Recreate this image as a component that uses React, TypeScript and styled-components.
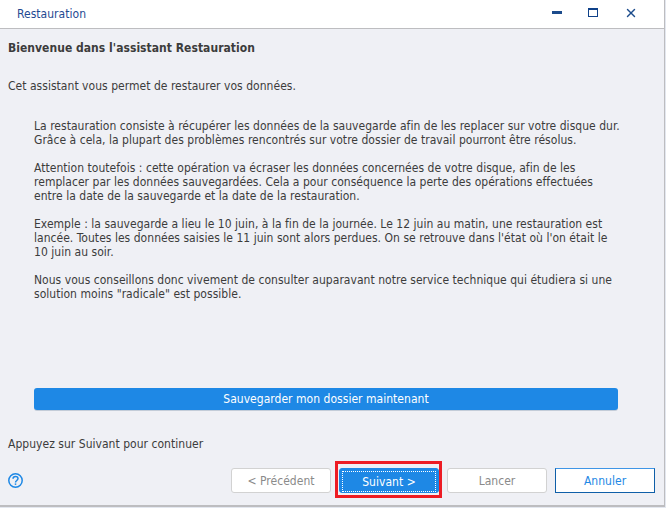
import { type FC } from 'react'
import styled, { createGlobalStyle } from 'styled-components'
import { X } from 'lucide-react'

const GlobalStyle = createGlobalStyle`
  html, body {
    margin: 0;
    height: 100%;
    background: #e3e7ef;
    overflow: hidden;
  }
  body {
    font-family: 'DejaVu Sans', 'Noto Sans', sans-serif;
    font-stretch: condensed;
    font-size: 12px;
    letter-spacing: 0.03px;
    color: #3c3c3c;
  }
`

const Window = styled.div`
  width: 665px;
  height: 507px;
  display: flex;
  flex-direction: column;
  box-sizing: border-box;
  border-right: 1px solid #bdbdc0;
  border-bottom: 2px solid #bdbdc0;
  background: #eff0f5;
`

const TitleBar = styled.header`
  height: 29px;
  flex: none;
  box-sizing: border-box;
  display: flex;
  align-items: center;
  justify-content: space-between;
  padding: 0 26px 1px 17px;
  background: #fff;
  border-bottom: 1px solid #bdbdc0;
`

const TitleText = styled.span`
  color: #1f4a92;
`

const WindowControls = styled.div`
  display: flex;
  align-items: center;
  gap: 26px;
  color: #1c4c8c;
  margin-top: -2px;
`

const MinimizeIcon = styled.span`
  width: 10px;
  height: 3px;
  background: #1c4c8c;
`

const MaximizeIcon = styled.span`
  width: 10px;
  height: 9px;
  box-sizing: border-box;
  border: 1px solid #0f4189;
  border-top-width: 2px;
`

const Content = styled.main`
  flex: 1;
  display: flex;
  flex-direction: column;
  padding: 11px 9px 0 8px;
`

const Heading = styled.h1`
  margin: 0;
  font-size: 12px;
  font-weight: 700;
  line-height: 16px;
`

const Intro = styled.p`
  margin: 22px 0 0;
  line-height: 16px;
`

const Explanation = styled.div`
  margin: 25px 31px 0 26px;
  display: flex;
  flex-direction: column;
  gap: 14px;
`

const Paragraph = styled.p`
  margin: 0;
  line-height: 14px;
`

const BackupButton = styled.button`
  margin: 87px 37px 0 26px;
  height: 22px;
  padding: 0;
  border: none;
  border-radius: 3px;
  background: #1e88e5;
  color: #fff;
  font: inherit;
  letter-spacing: inherit;
  box-shadow: 0 1px 0 #c3ccd8;
`

const Hint = styled.p`
  margin: 26px 0 0;
  line-height: 16px;
`

const Footer = styled.footer`
  margin-top: 16px;
  display: flex;
  align-items: center;
  justify-content: space-between;
`

const HelpIcon = styled.svg`
  width: 15px;
  height: 15px;
  fill: none;
  stroke: #1e88e5;
  stroke-width: 1.5;
`

const Actions = styled.div`
  display: flex;
  align-items: center;
  gap: 8px;
`

type ActionProps = { $variant: 'disabled' | 'primary' | 'cancel' }

const ActionButton = styled.button<ActionProps>`
  width: 100px;
  height: 25px;
  padding: 0;
  box-sizing: border-box;
  font: inherit;
  letter-spacing: inherit;
  border-radius: ${({ $variant }) => ($variant === 'cancel' ? '0' : '3px')};
  border: 1px solid
    ${({ $variant }) =>
      $variant === 'disabled' ? '#d2d2d2' : $variant === 'cancel' ? '#0f5fa8' : '#1e88e5'};
  border-top-color: ${({ $variant }) =>
    $variant === 'disabled' ? '#d2d2d2' : $variant === 'cancel' ? '#3f95e6' : '#1e88e5'};
  background: ${({ $variant }) => ($variant === 'primary' ? '#1e88e5' : '#fff')};
  color: ${({ $variant }) =>
    $variant === 'disabled' ? '#8a8a8a' : $variant === 'cancel' ? '#1e88e5' : '#fff'};
`

const HighlightedAction = styled.span`
  position: relative;
  display: flex;
`

const HighlightFrame = styled.span`
  position: absolute;
  inset: -7px -3px -5px -4px;
  border: 3px solid #ed1c24;
  pointer-events: none;
`

const FocusLabel = styled.span`
  display: flex;
  align-items: center;
  justify-content: center;
  margin: 2px;
  height: 19px;
  border: 1px dotted #fff;
`

const paragraphs = [
  "La restauration consiste à récupérer les données de la sauvegarde afin de les replacer sur votre disque dur. Grâce à cela, la plupart des problèmes rencontrés sur votre dossier de travail pourront être résolus.",
  "Attention toutefois : cette opération va écraser les données concernées de votre disque, afin de les remplacer par les données sauvegardées. Cela a pour conséquence la perte des opérations effectuées entre la date de la sauvegarde et la date de la restauration.",
  "Exemple : la sauvegarde a lieu le 10 juin, à la fin de la journée. Le 12 juin au matin, une restauration est lancée. Toutes les données saisies le 11 juin sont alors perdues. On se retrouve dans l'état où l'on était le 10 juin au soir.",
  'Nous vous conseillons donc vivement de consulter auparavant notre service technique qui étudiera si une solution moins "radicale" est possible.',
]

const App: FC = () => (
  <>
    <GlobalStyle />
    <Window>
      <TitleBar>
        <TitleText>Restauration</TitleText>
        <WindowControls>
          <MinimizeIcon />
          <MaximizeIcon />
          <X size={14} strokeWidth={2.5} />
        </WindowControls>
      </TitleBar>
      <Content>
        <Heading>Bienvenue dans l'assistant Restauration</Heading>
        <Intro>Cet assistant vous permet de restaurer vos données.</Intro>
        <Explanation>
          {paragraphs.map((text) => (
            <Paragraph key={text}>{text}</Paragraph>
          ))}
        </Explanation>
        <BackupButton>Sauvegarder mon dossier maintenant</BackupButton>
        <Hint>Appuyez sur Suivant pour continuer</Hint>
        <Footer>
          <HelpIcon viewBox="0 0 15 15">
            <circle cx="7.5" cy="7.5" r="6.7" />
            <path d="M5 5.8c0-1.5 1.1-2.4 2.5-2.4s2.5.9 2.5 2.2c0 1.9-2.5 1.9-2.5 3.9" />
            <path d="M7.5 10.4v1.5" />
          </HelpIcon>
          <Actions>
            <ActionButton $variant="disabled">&lt; Précédent</ActionButton>
            <HighlightedAction>
              <ActionButton $variant="primary">
                <FocusLabel>Suivant &gt;</FocusLabel>
              </ActionButton>
              <HighlightFrame />
            </HighlightedAction>
            <ActionButton $variant="disabled">Lancer</ActionButton>
            <ActionButton $variant="cancel">Annuler</ActionButton>
          </Actions>
        </Footer>
      </Content>
    </Window>
  </>
)

export default App
